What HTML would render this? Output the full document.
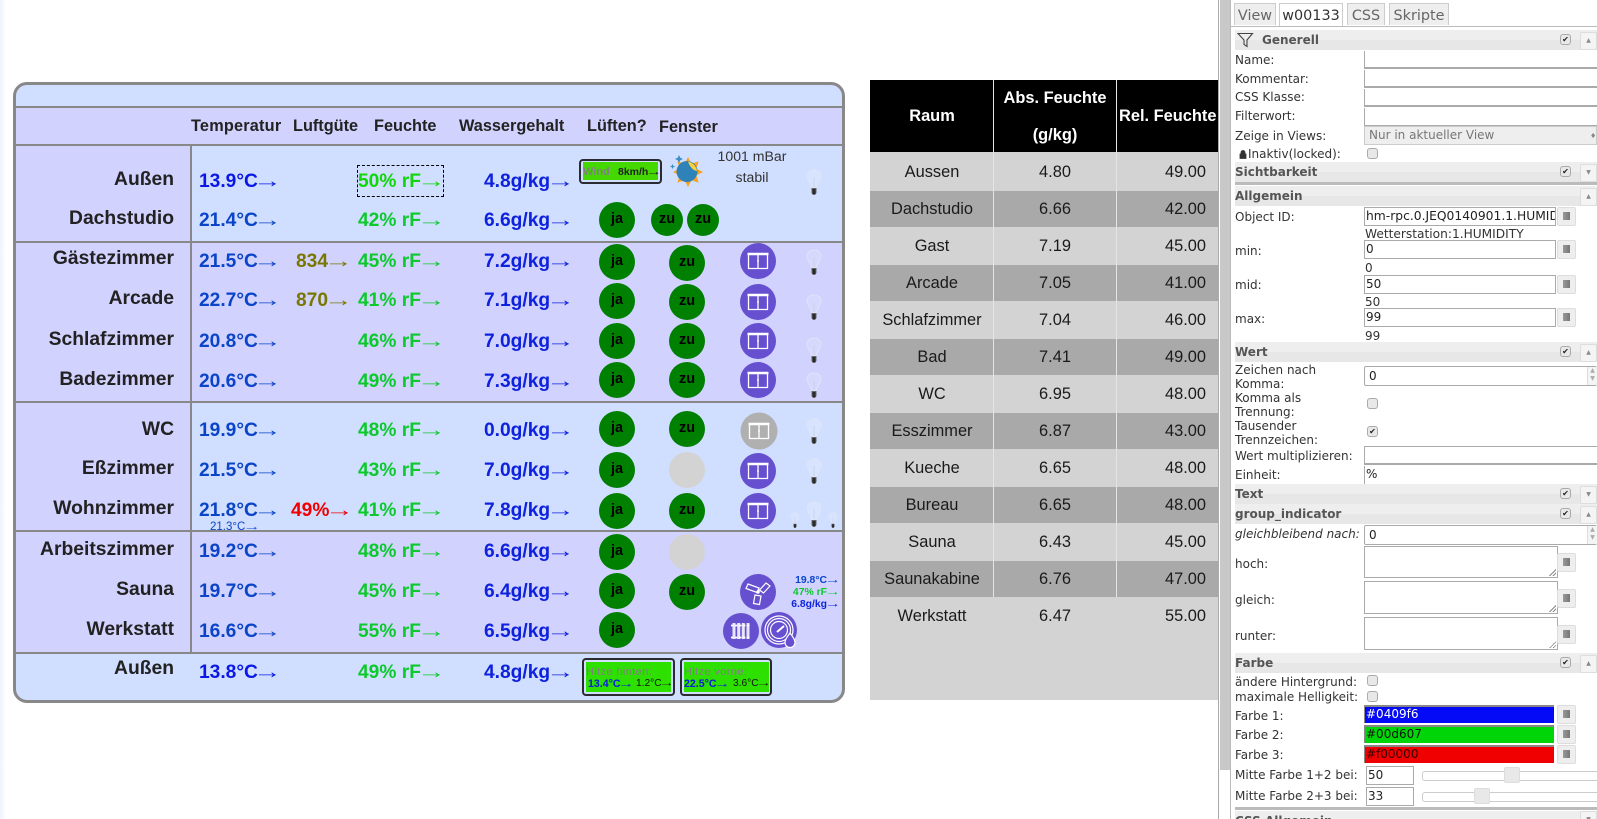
<!DOCTYPE html>
<html lang="de"><head><meta charset="utf-8"><title>Raumklima</title>
<style>
html,body{margin:0;padding:0;background:#fff;width:1597px;height:819px;overflow:hidden}
body{font-family:"Liberation Sans",Arial,sans-serif}
div{position:absolute}
#root{left:0;top:0;width:1597px;height:819px;overflow:hidden;background:#fff}
.t{position:absolute;white-space:nowrap;line-height:0}
.t i{font-style:normal;font-weight:normal;display:inline-block;transform:scaleX(1.5);transform-origin:left center;margin-left:-.23em}
.h{font:bold 16.3px/0 "Liberation Sans",sans-serif;color:#222}
.l{font:bold 19.3px/0 "Liberation Sans",sans-serif;color:#222;right:1423px;text-align:right}
.v{font:bold 19.2px/0 "Liberation Sans",sans-serif}
.c1{color:#0a44c8}.c0{color:#0a18e6}.g{color:#0cc92c}.g0{color:#10d60a}.w{color:#0e22de}.o{color:#787800}.tp{left:199px}.wa{left:484px}
.c{position:absolute;border-radius:50%;background:#008000;color:#000;font:bold 14.5px/35px "Liberation Sans",sans-serif;text-align:center;width:36px;height:36px}
.gr{background:#d3d3d3}
.ic{position:absolute;width:36px;height:36px}
.bu{position:absolute;width:16px;height:26px}
.tb{position:absolute;font:16.4px/0 "Liberation Sans",sans-serif;color:#1a1a1a;white-space:nowrap;transform:translateX(-50%)}
.n{position:absolute;left:1165px;font:16.4px/0 "Liberation Sans",sans-serif;color:#1a1a1a}
.th{position:absolute;font:bold 16.4px/0 "Liberation Sans",sans-serif;color:#fff;white-space:nowrap}
.s{font:12px/0 "DejaVu Sans",sans-serif;color:#333;position:absolute;left:1235px;white-space:nowrap}
.sh{position:absolute;left:1235px;right:0;height:20px;background:linear-gradient(#eee 50%,#e7e7e7 50%)}
.sh b{position:absolute;left:0;top:10px;font:bold 12px/0 "DejaVu Sans",sans-serif;color:#555;white-space:nowrap}
.i{position:absolute;left:1364px;box-sizing:border-box;background:#fff;border:1px solid #aaa;font:12px/16px "DejaVu Sans",sans-serif;color:#222;padding-left:1px;white-space:nowrap;overflow:hidden}
.bt{position:absolute;left:1557px;width:17px;height:17px;background:#eee;border:1px solid #ddd;border-radius:2px}
.bt:after{content:"";position:absolute;left:5px;top:4px;width:7px;height:8px;background:linear-gradient(90deg,#999,#777)}
.ck{position:absolute;width:9px;height:9px;border:1px solid #aaa;border-radius:3px;background:#e8e8e8;font:bold 8px/9px "DejaVu Sans",sans-serif;color:#222;text-align:center}
.up{position:absolute;left:1580px;width:17px;height:18px;background:#f4f4f4;border:1px solid #ddd;border-radius:2px;box-sizing:border-box;font:6px/16px "DejaVu Sans",sans-serif;color:#888;text-align:center}
.tab{position:absolute;top:3px;height:22px;box-sizing:border-box;border:1px solid #ccc;border-bottom:0;background:#eee;font:14.4px/25px "DejaVu Sans",sans-serif;color:#666;text-align:center}
.ta{position:absolute;left:1364px;width:194px;box-sizing:border-box;background:#fff;border:1px solid #aaa}
.ta:after{content:"";position:absolute;right:1px;bottom:1px;width:7px;height:7px;background:linear-gradient(135deg,transparent 50%,#888 50%,#888 60%,transparent 60%,transparent 75%,#888 75%,#888 85%,transparent 85%)}
.sp{position:absolute;right:0;width:9px;background:#f4f4f4;border-left:1px solid #ddd;font:6px/8px "DejaVu Sans",sans-serif;color:#aaa;text-align:center}
</style></head><body>
<svg width="0" height="0" style="position:absolute">
<defs>
<symbol id="win" viewBox="0 0 36 36"><g fill="none" stroke="#fff" stroke-width="1.3"><path d="M7.5 11h21" stroke-width="2.5"/><path d="M8.5 11v14.5h19V11M18 12v13.5"/></g><path d="M17 18h2" stroke="#fff"/></symbol>
<symbol id="bulb" viewBox="0 0 16 26"><path d="M8 1C3.5 1 1 4 1 7.500c0 3.500 3.500 6 4.500 11h5c1-5 4.500-7.500 4.500-11C15 4 12.500 1 8 1z" fill="#fff" fill-opacity=".15" stroke="#e2e6f2" stroke-width=".8"/><path d="M8 8v10" stroke="#c8cce0" stroke-width=".7"/><path d="M5.500 19h5v5l-1.500 2h-2l-1.500-2z" fill="#666"/><path d="M6.500 20h3v5h-3z" fill="#2a2a2a"/></symbol>
</defs></svg>
<div id="root">
<div style="left:0;top:0;width:6px;height:819px;background:linear-gradient(90deg,#eef4ff,#fff)"></div>

<!-- Panel -->
<div style="left:13px;top:82px;width:832px;height:621px;box-sizing:border-box;border:3px solid #888;border-radius:14px;background:#d0deff;overflow:hidden">
 <div style="left:0;top:23px;width:100%;height:36px;background:#d2d2ff"></div>
 <div style="left:0;top:61px;width:174px;height:506px;background:#d2d2ff"></div>
 <div style="left:0;top:158px;width:100%;height:158px;background:#d2d2ff"></div>
 <div style="left:0;top:447px;width:100%;height:120px;background:#d2d2ff"></div>
 <div style="left:0;top:21px;width:100%;height:2px;background:#888"></div>
 <div style="left:0;top:59px;width:100%;height:2px;background:#888"></div>
 <div style="left:0;top:156px;width:100%;height:2px;background:#888"></div>
 <div style="left:0;top:316px;width:100%;height:2px;background:#888"></div>
 <div style="left:0;top:445px;width:100%;height:2px;background:#888"></div>
 <div style="left:0;top:567px;width:100%;height:2px;background:#888"></div>
 <div style="left:174px;top:59px;width:2px;height:510px;background:#888"></div>
</div>

<span class="t h" style="left:191px;top:126px;letter-spacing:.2px">Temperatur</span>
<span class="t h" style="left:293px;top:126px">Luftgüte</span>
<span class="t h" style="left:374px;top:126px">Feuchte</span>
<span class="t h" style="left:459px;top:126px">Wassergehalt</span>
<span class="t h" style="left:587px;top:126px">Lüften?</span>
<span class="t h" style="left:659px;top:127px">Fenster</span>

<span class="t l" style="top:180px">Außen</span>
<span class="t l" style="top:219px">Dachstudio</span>
<span class="t l" style="top:259px">Gästezimmer</span>
<span class="t l" style="top:299px">Arcade</span>
<span class="t l" style="top:340px">Schlafzimmer</span>
<span class="t l" style="top:380px">Badezimmer</span>
<span class="t l" style="top:430px">WC</span>
<span class="t l" style="top:469px">Eßzimmer</span>
<span class="t l" style="top:509px">Wohnzimmer</span>
<span class="t l" style="top:550px">Arbeitszimmer</span>
<span class="t l" style="top:590px">Sauna</span>
<span class="t l" style="top:630px">Werkstatt</span>
<span class="t l" style="top:669px">Außen</span>

<span class="t v tp c0" style="top:182px">13.9°C<i>→</i></span>
<span class="t v tp c1" style="top:221px">21.4°C<i>→</i></span>
<span class="t v tp c1" style="top:262px">21.5°C<i>→</i></span>
<span class="t v tp c1" style="top:301px">22.7°C<i>→</i></span>
<span class="t v tp c1" style="top:342px">20.8°C<i>→</i></span>
<span class="t v tp c1" style="top:382px">20.6°C<i>→</i></span>
<span class="t v tp c1" style="top:431px">19.9°C<i>→</i></span>
<span class="t v tp c1" style="top:471px">21.5°C<i>→</i></span>
<span class="t v tp c1" style="top:511px">21.8°C<i>→</i></span>
<span class="t v tp c1" style="top:552px">19.2°C<i>→</i></span>
<span class="t v tp c1" style="top:592px">19.7°C<i>→</i></span>
<span class="t v tp c1" style="top:632px">16.6°C<i>→</i></span>
<span class="t v tp c0" style="top:673px">13.8°C<i>→</i></span>
<span class="t c1" style="left:210px;top:527px;font:11.5px/0 'Liberation Sans',sans-serif">21.3°C<i>→</i></span>

<span class="t v o" style="left:296px;top:262px">834<i>→</i></span>
<span class="t v o" style="left:296px;top:301px">870<i>→</i></span>
<span class="t v" style="left:291px;top:511px;color:#f00000">49%<i>→</i></span>

<div style="left:357px;top:165px;width:85px;height:30px;border:1px dashed #000"></div>
<span class="t v g0" style="left:358px;top:182px">50% rF<i>→</i></span>
<span class="t v g" style="left:358px;top:221px">42% rF<i>→</i></span>
<span class="t v g" style="left:358px;top:262px">45% rF<i>→</i></span>
<span class="t v g" style="left:358px;top:301px">41% rF<i>→</i></span>
<span class="t v g" style="left:358px;top:342px">46% rF<i>→</i></span>
<span class="t v g" style="left:358px;top:382px">49% rF<i>→</i></span>
<span class="t v g" style="left:358px;top:431px">48% rF<i>→</i></span>
<span class="t v g" style="left:358px;top:471px">43% rF<i>→</i></span>
<span class="t v g" style="left:358px;top:511px">41% rF<i>→</i></span>
<span class="t v g" style="left:358px;top:552px">48% rF<i>→</i></span>
<span class="t v g" style="left:358px;top:592px">45% rF<i>→</i></span>
<span class="t v g" style="left:358px;top:632px">55% rF<i>→</i></span>
<span class="t v g" style="left:358px;top:673px">49% rF<i>→</i></span>

<span class="t v wa w" style="top:182px">4.8g/kg<i>→</i></span>
<span class="t v wa w" style="top:221px">6.6g/kg<i>→</i></span>
<span class="t v wa w" style="top:262px">7.2g/kg<i>→</i></span>
<span class="t v wa w" style="top:301px">7.1g/kg<i>→</i></span>
<span class="t v wa w" style="top:342px">7.0g/kg<i>→</i></span>
<span class="t v wa w" style="top:382px">7.3g/kg<i>→</i></span>
<span class="t v wa w" style="top:431px">0.0g/kg<i>→</i></span>
<span class="t v wa w" style="top:471px">7.0g/kg<i>→</i></span>
<span class="t v wa w" style="top:511px">7.8g/kg<i>→</i></span>
<span class="t v wa w" style="top:552px">6.6g/kg<i>→</i></span>
<span class="t v wa w" style="top:592px">6.4g/kg<i>→</i></span>
<span class="t v wa w" style="top:632px">6.5g/kg<i>→</i></span>
<span class="t v wa w" style="top:673px">4.8g/kg<i>→</i></span>

<!-- ja -->
<span class="c" style="left:599px;top:202px">ja</span>
<span class="c" style="left:599px;top:244px">ja</span>
<span class="c" style="left:599px;top:283px">ja</span>
<span class="c" style="left:599px;top:323px">ja</span>
<span class="c" style="left:599px;top:362px">ja</span>
<span class="c" style="left:599px;top:411px">ja</span>
<span class="c" style="left:599px;top:452px">ja</span>
<span class="c" style="left:599px;top:493px">ja</span>
<span class="c" style="left:599px;top:534px">ja</span>
<span class="c" style="left:599px;top:573px">ja</span>
<span class="c" style="left:599px;top:612px">ja</span>
<!-- zu -->
<span class="c" style="left:651px;top:204px;width:32px;height:32px;line-height:31px">zu</span>
<span class="c" style="left:687px;top:204px;width:32px;height:32px;line-height:31px">zu</span>
<span class="c" style="left:669px;top:245px;line-height:34px">zu</span>
<span class="c" style="left:669px;top:284px;line-height:34px">zu</span>
<span class="c" style="left:669px;top:323px;line-height:34px">zu</span>
<span class="c" style="left:669px;top:362px;line-height:34px">zu</span>
<span class="c" style="left:669px;top:411px;line-height:34px">zu</span>
<span class="c gr" style="left:669px;top:452px"></span>
<span class="c" style="left:669px;top:493px;line-height:34px">zu</span>
<span class="c gr" style="left:669px;top:534px"></span>
<span class="c" style="left:669px;top:574px;line-height:34px">zu</span>

<!-- window icons -->
<svg class="ic" style="left:740px;top:243px"><circle cx="18" cy="18" r="18" fill="#6650d0"/><use href="#win" width="36" height="36"/></svg>
<svg class="ic" style="left:740px;top:284px"><circle cx="18" cy="18" r="18" fill="#6650d0"/><use href="#win" width="36" height="36"/></svg>
<svg class="ic" style="left:740px;top:323px"><circle cx="18" cy="18" r="18" fill="#6650d0"/><use href="#win" width="36" height="36"/></svg>
<svg class="ic" style="left:740px;top:362px"><circle cx="18" cy="18" r="18" fill="#6650d0"/><use href="#win" width="36" height="36"/></svg>
<svg class="ic" style="left:740px;top:412px;width:38px;height:38px"><circle cx="19" cy="19" r="18.500" fill="#b0b0b0"/><use href="#win" x="1" y="1" width="36" height="36"/></svg>
<svg class="ic" style="left:740px;top:453px"><circle cx="18" cy="18" r="18" fill="#6650d0"/><use href="#win" width="36" height="36"/></svg>
<svg class="ic" style="left:740px;top:493px"><circle cx="18" cy="18" r="18" fill="#6650d0"/><use href="#win" width="36" height="36"/></svg>
<!-- fan -->
<svg class="ic" style="left:740px;top:574px"><circle cx="18" cy="18" r="18" fill="#6650d0"/><g fill="none" stroke="#fff" stroke-width="1.200"><path d="M8 10l11 4-2 4.500-11-4z"/><path d="M26 9l4 3-6.500 7-4-3z"/><path d="M15 21l6 1-1.500 8.500-6-1z"/></g><circle cx="18" cy="18" r="1.800" fill="#fff"/></svg>
<!-- radiator -->
<svg class="ic" style="left:723px;top:613px"><circle cx="18" cy="18" r="18" fill="#6650d0"/><g stroke="#fff" fill="none"><path d="M11 10v16M15.700 10v16M20.300 10v16M25 10v16" stroke-width="3" stroke-opacity=".85"/><path d="M8 12.500h20M8 24.500h20" stroke-width="1.800" stroke-dasharray="2.500 1.500"/></g></svg>
<!-- gauge -->
<svg class="ic" style="left:761px;top:612px;overflow:visible"><circle cx="18" cy="18" r="18" fill="#6650d0"/><g fill="none" stroke="#fff" stroke-width="1.200"><circle cx="18" cy="18" r="14"/><circle cx="18" cy="18" r="11.500"/><circle cx="18" cy="18" r="8.500"/></g><path d="M16 20l7-6" stroke="#fff" stroke-width="2"/><path d="M29 21c2 3 5 6 5 9.500a5 5 0 0 1-10 0c0-3.500 3-6.500 5-9.500z" fill="#6650d0" stroke="#fff" stroke-width="1.200"/></svg>

<!-- bulbs -->
<svg class="bu" style="left:806px;top:169px"><use href="#bulb"/></svg>
<svg class="bu" style="left:806px;top:249px"><use href="#bulb"/></svg>
<svg class="bu" style="left:806px;top:294px"><use href="#bulb"/></svg>
<svg class="bu" style="left:806px;top:337px"><use href="#bulb"/></svg>
<svg class="bu" style="left:806px;top:372px"><use href="#bulb"/></svg>
<svg class="bu" style="left:806px;top:418px"><use href="#bulb"/></svg>
<svg class="bu" style="left:806px;top:458px"><use href="#bulb"/></svg>
<svg class="bu" style="left:806px;top:501px"><use href="#bulb"/></svg>
<svg class="bu" style="left:790px;top:512px;width:10px;height:16px"><use href="#bulb" width="10" height="16"/></svg>
<svg class="bu" style="left:828px;top:512px;width:10px;height:16px"><use href="#bulb" width="10" height="16"/></svg>

<!-- wind -->
<div style="left:579px;top:159px;width:79px;height:21px;border:2px solid #2a2a30;border-radius:4px"></div>
<div style="left:583px;top:162px;width:75px;height:18px;background:#45d800"></div>
<span class="t" style="left:583px;top:172px;font:bold 11px/0 'Liberation Sans',sans-serif;color:#808080">Wind</span>
<span class="t" style="left:618px;top:172px;font:bold 10.500px/0 'Liberation Sans',sans-serif;color:#222">8km/h<i>→</i></span>

<!-- weather -->
<svg style="position:absolute;left:670px;top:154px" width="36" height="36" viewBox="0 0 36 36"><path d="M18 3L21.400 9.700 28.600 7.400 26.300 14.600 33 18 26.300 21.400 28.600 28.600 21.400 26.300 18 33 14.600 26.300 7.400 28.600 9.700 21.400 3 18 9.700 14.600 7.400 7.400 14.600 9.700z" fill="#f9a01a"/><circle cx="17" cy="17.500" r="10.500" fill="#2e82b8"/><path d="M18 7.500c4 .5 8.500 4.500 9 9.500-4-.5-7-4-9-9.500z" fill="#fbd23c"/></svg>
<svg style="position:absolute;left:670px;top:154px" width="14" height="16" viewBox="0 0 14 16"><path d="M9 1l1.300 2.700L13 5l-2.700 1.300L9 9 7.700 6.300 5 5l2.700-1.300zM2.500 10l.8 1.700 1.700.8-1.700.8-.8 1.700-.8-1.700L0 12.500l1.700-.8z" fill="#3a8fc8"/></svg>

<span class="t" style="left:717px;top:156px;width:70px;text-align:center;font:14.1px/0 'Liberation Sans',sans-serif;color:#333">1001 mBar</span>
<span class="t" style="left:717px;top:177px;width:70px;text-align:center;font:14.1px/0 'Liberation Sans',sans-serif;color:#333">stabil</span>

<span class="t c1" style="right:762px;top:581px;font:bold 10.400px/0 'Liberation Sans',sans-serif">19.8°C<i>→</i></span>
<span class="t g" style="right:762px;top:593px;font:bold 10.400px/0 'Liberation Sans',sans-serif">47% rF<i>→</i></span>
<span class="t w" style="right:762px;top:605px;font:bold 10.400px/0 'Liberation Sans',sans-serif">6.8g/kg<i>→</i></span>

<!-- bottom boxes -->
<div style="left:582px;top:658px;width:89px;height:34px;border:2px solid #2a2a30;border-radius:4px"></div>
<div style="left:586px;top:662px;width:85px;height:30px;background:#2de000"></div>
<div style="left:680px;top:658px;width:88px;height:34px;border:2px solid #2a2a30;border-radius:4px"></div>
<div style="left:684px;top:662px;width:85px;height:30px;background:#2de000"></div>
<span class="t" style="left:586px;top:672px;font:11.200px/0 'Liberation Sans',sans-serif;color:#808080;letter-spacing:.3px">Hitze hinten:</span>
<span class="t" style="left:684px;top:672px;font:11.200px/0 'Liberation Sans',sans-serif;color:#808080;letter-spacing:.3px">Hitze vorne:</span>
<span class="t c0" style="left:588px;top:684px;font:bold 10.600px/0 'Liberation Sans',sans-serif">13.4°C<i>→</i></span>
<span class="t" style="left:636px;top:684px;font:10.200px/0 'Liberation Sans',sans-serif;color:#111">1.2°C<i>→</i></span>
<span class="t c0" style="left:684px;top:684px;font:bold 10.600px/0 'Liberation Sans',sans-serif">22.5°C<i>→</i></span>
<span class="t" style="left:733px;top:684px;font:10.200px/0 'Liberation Sans',sans-serif;color:#111">3.6°C<i>→</i></span>

<!-- Right table -->
<div style="left:870px;top:80px;width:348px;height:620px;background:#d3d3d3;overflow:hidden">
 <div style="left:0;top:0;width:100%;height:72px;background:#000"></div>
 <div style="left:0;top:111px;width:100%;height:36px;background:#a9a9a9"></div>
 <div style="left:0;top:185px;width:100%;height:36px;background:#a9a9a9"></div>
 <div style="left:0;top:259px;width:100%;height:36px;background:#a9a9a9"></div>
 <div style="left:0;top:333px;width:100%;height:36px;background:#a9a9a9"></div>
 <div style="left:0;top:407px;width:100%;height:36px;background:#a9a9a9"></div>
 <div style="left:0;top:481px;width:100%;height:36px;background:#a9a9a9"></div>
 <div style="left:123px;top:0;width:1px;height:517px;background:#e4e4e4"></div>
 <div style="left:246px;top:0;width:1px;height:517px;background:#e4e4e4"></div>
 <span class="th" style="left:249px;top:36px">Rel. Feuchte</span>
</div>
<span class="th" style="left:932px;top:116px;transform:translateX(-50%)">Raum</span>
<span class="th" style="left:1055px;top:98px;transform:translateX(-50%)">Abs. Feuchte</span>
<span class="th" style="left:1055px;top:135px;transform:translateX(-50%)">(g/kg)</span>

<span class="tb" style="left:932px;top:172px">Aussen</span><span class="tb" style="left:1055px;top:172px">4.80</span><span class="n" style="top:172px">49.00</span>
<span class="tb" style="left:932px;top:209px">Dachstudio</span><span class="tb" style="left:1055px;top:209px">6.66</span><span class="n" style="top:209px">42.00</span>
<span class="tb" style="left:932px;top:246px">Gast</span><span class="tb" style="left:1055px;top:246px">7.19</span><span class="n" style="top:246px">45.00</span>
<span class="tb" style="left:932px;top:283px">Arcade</span><span class="tb" style="left:1055px;top:283px">7.05</span><span class="n" style="top:283px">41.00</span>
<span class="tb" style="left:932px;top:320px">Schlafzimmer</span><span class="tb" style="left:1055px;top:320px">7.04</span><span class="n" style="top:320px">46.00</span>
<span class="tb" style="left:932px;top:357px">Bad</span><span class="tb" style="left:1055px;top:357px">7.41</span><span class="n" style="top:357px">49.00</span>
<span class="tb" style="left:932px;top:394px">WC</span><span class="tb" style="left:1055px;top:394px">6.95</span><span class="n" style="top:394px">48.00</span>
<span class="tb" style="left:932px;top:431px">Esszimmer</span><span class="tb" style="left:1055px;top:431px">6.87</span><span class="n" style="top:431px">43.00</span>
<span class="tb" style="left:932px;top:468px">Kueche</span><span class="tb" style="left:1055px;top:468px">6.65</span><span class="n" style="top:468px">48.00</span>
<span class="tb" style="left:932px;top:505px">Bureau</span><span class="tb" style="left:1055px;top:505px">6.65</span><span class="n" style="top:505px">48.00</span>
<span class="tb" style="left:932px;top:542px">Sauna</span><span class="tb" style="left:1055px;top:542px">6.43</span><span class="n" style="top:542px">45.00</span>
<span class="tb" style="left:932px;top:579px">Saunakabine</span><span class="tb" style="left:1055px;top:579px">6.76</span><span class="n" style="top:579px">47.00</span>
<span class="tb" style="left:932px;top:616px">Werkstatt</span><span class="tb" style="left:1055px;top:616px">6.47</span><span class="n" style="top:616px">55.00</span>

<!-- Splitter -->
<div style="left:1218px;top:0;width:1px;height:819px;background:#aaa"></div>
<div style="left:1220px;top:0;width:10px;height:770px;background:#c8c8c8"></div>
<div style="left:1230px;top:0;width:1px;height:819px;background:#bbb"></div>

<!-- Tabs -->
<div class="tab" style="left:1234px;width:42px">View</div>
<div class="tab" style="left:1279px;width:64px;background:#fff;color:#333;height:23px">w00133</div>
<div class="tab" style="left:1347px;width:38px">CSS</div>
<div class="tab" style="left:1389px;width:60px">Skripte</div>
<div style="left:1231px;top:26px;right:0;height:1px;background:#bbb"></div>

<!-- Section headers -->
<div class="sh" style="top:30px"><b style="left:27px">Generell</b></div>
<svg style="position:absolute;left:1237px;top:32px" width="17" height="16" viewBox="0 0 17 16"><path d="M1 1.500h14.500L10 8v6.500L7 12.500V8z" fill="none" stroke="#444" stroke-width="1.100"/></svg>
<div class="sh" style="top:162px"><b>Sichtbarkeit</b></div>
<div style="left:1235px;top:182px;right:0;height:3px;background:#bbb"></div>
<div class="sh" style="top:186px"><b>Allgemein</b></div>
<div class="sh" style="top:342px"><b>Wert</b></div>
<div class="sh" style="top:484px"><b>Text</b></div>
<div class="sh" style="top:504px"><b>group_indicator</b></div>
<div class="sh" style="top:653px"><b>Farbe</b></div>
<div style="left:1235px;top:807px;right:0;height:3px;background:#bbb"></div>
<div class="sh" style="top:811px"><b>CSS Allgemein</b></div>

<div class="ck" style="left:1560px;top:34px">✔</div><div class="up" style="top:32px">▲</div>
<div class="ck" style="left:1560px;top:166px">✔</div><div class="up" style="top:164px">▼</div>
<div class="up" style="top:188px">▲</div>
<div class="ck" style="left:1560px;top:346px">✔</div><div class="up" style="top:344px">▲</div>
<div class="ck" style="left:1560px;top:488px">✔</div><div class="up" style="top:486px">▼</div>
<div class="ck" style="left:1560px;top:508px">✔</div><div class="up" style="top:506px">▲</div>
<div class="ck" style="left:1560px;top:657px">✔</div><div class="up" style="top:655px">▲</div>
<div class="up" style="top:811px">▼</div>

<!-- Generell -->
<span class="s" style="top:60px">Name:</span><div class="i" style="top:51px;width:233px;height:18px;border-width:0 0 2px 1px"></div>
<span class="s" style="top:79px">Kommentar:</span><div class="i" style="top:70px;width:233px;height:18px;border-width:0 0 2px 1px"></div>
<span class="s" style="top:97px">CSS Klasse:</span><div class="i" style="top:89px;width:233px;height:18px;border-width:0 0 2px 1px"></div>
<span class="s" style="top:116px">Filterwort:</span><div class="i" style="top:108px;width:233px;height:18px;border-width:0 0 1px 1px"></div>
<span class="s" style="top:136px">Zeige in Views:</span><div class="i" style="top:126px;width:233px;height:19px;background:#eee;color:#777;border-color:#ccc;padding-left:4px">Nur in aktueller View</div>
<span class="t" style="left:1590px;top:136px;font:7px/0 'DejaVu Sans',sans-serif;color:#888">♦</span>
<span class="s" style="top:154px;left:1248px">Inaktiv(locked):</span>
<svg style="position:absolute;left:1239px;top:150px" width="8" height="9" viewBox="0 0 8 9"><path d="M1 4h6v4.500H1zM2 4V2.500a2 2 0 0 1 4 0V4" fill="#333" stroke="#333" stroke-width=".8"/></svg>
<div class="ck" style="left:1367px;top:148px"></div>

<!-- Allgemein -->
<span class="s" style="top:217px">Object ID:</span><div class="i" style="top:207px;width:192px;height:19px;font-size:12.300px">hm-rpc.0.JEQ0140901.1.HUMIDITY</div><div class="bt" style="top:207px"></div>
<span class="s" style="left:1365px;top:234px;font-size:12.200px">Wetterstation:1.HUMIDITY</span>
<span class="s" style="top:251px">min:</span><div class="i" style="top:240px;width:192px;height:19px">0</div><div class="bt" style="top:240px"></div>
<span class="s" style="left:1365px;top:268px">0</span>
<span class="s" style="top:285px">mid:</span><div class="i" style="top:275px;width:192px;height:19px">50</div><div class="bt" style="top:275px"></div>
<span class="s" style="left:1365px;top:302px">50</span>
<span class="s" style="top:319px">max:</span><div class="i" style="top:308px;width:192px;height:19px">99</div><div class="bt" style="top:308px"></div>
<span class="s" style="left:1365px;top:336px">99</span>

<!-- Wert -->
<span class="s" style="top:370px">Zeichen nach</span><span class="s" style="top:384px">Komma:</span>
<div class="i" style="top:366px;width:233px;height:20px;padding-left:4px;line-height:19px;border-radius:2px">0</div>
<div class="sp" style="left:1587px;top:367px;height:18px">▲<br>▼</div>
<span class="s" style="top:398px">Komma als</span><span class="s" style="top:412px">Trennung:</span>
<div class="ck" style="left:1367px;top:398px"></div>
<span class="s" style="top:426px">Tausender</span><span class="s" style="top:440px">Trennzeichen:</span>
<div class="ck" style="left:1367px;top:426px">✔</div>
<span class="s" style="top:456px">Wert multiplizieren:</span><div class="i" style="top:446px;width:233px;height:19px;border-width:1px 0 2px 1px"></div>
<span class="s" style="top:475px">Einheit:</span><div class="i" style="top:466px;width:233px;height:18px;border-width:0 0 0 1px">%</div>

<!-- group_indicator -->
<span class="s" style="top:534px;font-style:italic">gleichbleibend nach:</span>
<div class="i" style="top:525px;width:233px;height:20px;padding-left:4px;line-height:19px;border-radius:2px">0</div>
<div class="sp" style="left:1587px;top:526px;height:18px">▲<br>▼</div>
<span class="s" style="top:564px">hoch:</span><div class="ta" style="top:546px;height:32px"></div><div class="bt" style="top:553px"></div>
<span class="s" style="top:600px">gleich:</span><div class="ta" style="top:581px;height:33px"></div><div class="bt" style="top:589px"></div>
<span class="s" style="top:636px">runter:</span><div class="ta" style="top:617px;height:33px"></div><div class="bt" style="top:625px"></div>

<!-- Farbe -->
<span class="s" style="top:682px">ändere Hintergrund:</span><div class="ck" style="left:1367px;top:675px"></div>
<span class="s" style="top:697px">maximale Helligkeit:</span><div class="ck" style="left:1367px;top:691px"></div>
<span class="s" style="top:716px">Farbe 1:</span><div class="i" style="top:705px;width:190px;height:18px;background:#0409f6;color:#fff;border:0;border-top:2px solid #888;border-left:1px solid #888;line-height:15px">#0409f6</div><div class="bt" style="top:705px"></div>
<span class="s" style="top:735px">Farbe 2:</span><div class="i" style="top:725px;width:190px;height:18px;background:#00d607;color:#111;border:0;border-top:2px solid #888;border-left:1px solid #888;line-height:15px">#00d607</div><div class="bt" style="top:725px"></div>
<span class="s" style="top:755px">Farbe 3:</span><div class="i" style="top:745px;width:190px;height:18px;background:#f00000;color:#300;border:0;border-top:2px solid #888;border-left:1px solid #888;line-height:15px">#f00000</div><div class="bt" style="top:745px"></div>
<span class="s" style="top:775px">Mitte Farbe 1+2 bei:</span><div class="i" style="left:1366px;top:766px;width:48px;height:19px;padding-left:1px">50</div>
<div style="left:1422px;top:771px;width:180px;height:10px;box-sizing:border-box;border:1px solid #ccc;border-radius:3px;background:#fff"></div>
<div style="left:1504px;top:767px;width:14px;height:14px;background:#e8e8e8;border:1px solid #ddd;border-radius:2px"></div>
<span class="s" style="top:796px">Mitte Farbe 2+3 bei:</span><div class="i" style="left:1366px;top:787px;width:48px;height:19px;padding-left:1px">33</div>
<div style="left:1422px;top:792px;width:180px;height:10px;box-sizing:border-box;border:1px solid #ccc;border-radius:3px;background:#fff"></div>
<div style="left:1474px;top:788px;width:14px;height:14px;background:#e8e8e8;border:1px solid #ddd;border-radius:2px"></div>
</div>
</body></html>
